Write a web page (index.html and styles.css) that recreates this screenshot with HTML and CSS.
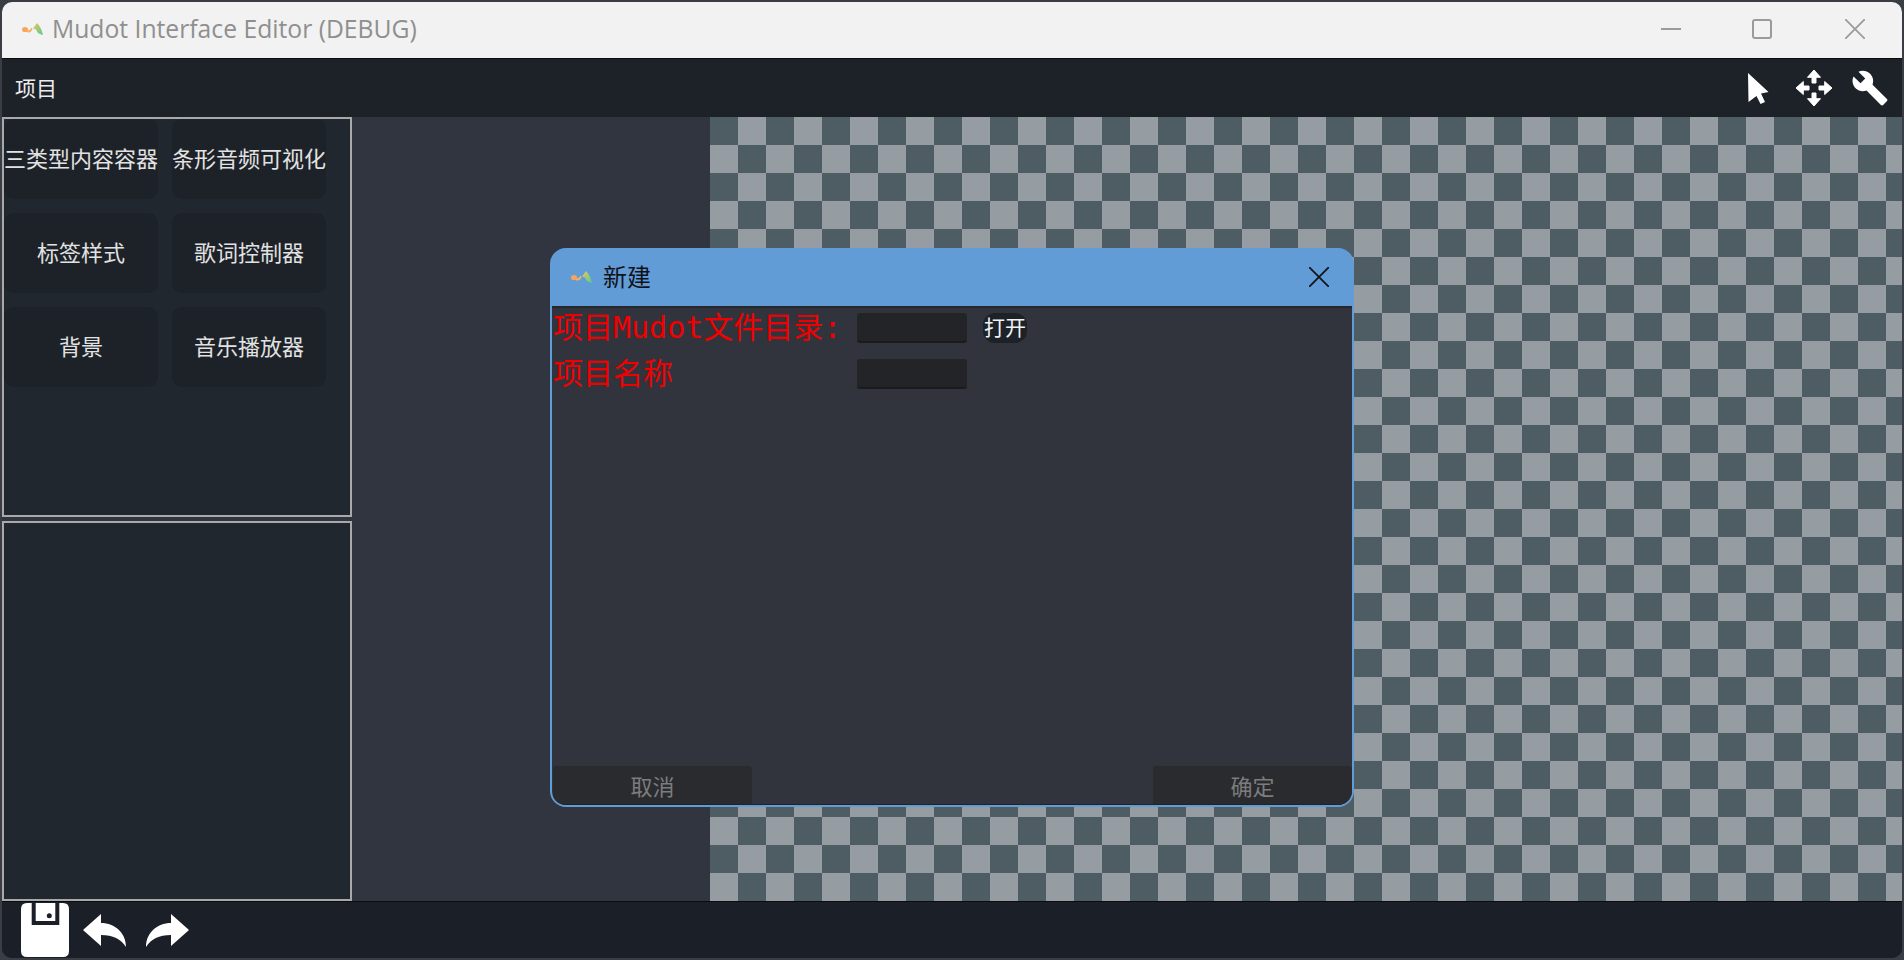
FILE: index.html
```html
<!DOCTYPE html>
<html lang="zh-CN">
  <head>
    <meta charset="UTF-8">
    <title>Mudot Interface Editor (DEBUG)</title>
    <link rel="stylesheet" href="styles.css">
  </head>

  <body>
    <svg class="defs" width="0" height="0" aria-hidden="true">
      <defs>
        <linearGradient id="logo-green" x1="0" y1="0" x2="1" y2="1">
          <stop offset="0" stop-color="#f2c35c"/>
          <stop offset="1" stop-color="#4fcf8c"/>
        </linearGradient>
        <symbol id="logo" viewBox="0 0 21 12">
          <ellipse cx="3" cy="6.500" rx="3" ry="2.600" fill="#f8a45c"/>
          <path d="M5 7.500 Q8 8 9.500 4.500 L10.500 6.500 Q8 11 5 9z" fill="#f8b060"/>
          <path d="M11 5.500 L15 0 Q19.500 4.500 21 12 Q15.500 11 14 6.500 z" fill="url(#logo-green)"/>
        </symbol>
      </defs>
    </svg>

    <div class="window">
      <header class="titlebar">
        <svg class="logo"><use href="#logo"/></svg>
        <span class="title">Mudot Interface Editor (DEBUG)</span>
        <div class="controls">
          <svg width="20" height="20" viewBox="0 0 20 20"><path d="M0 10h20" stroke="#9b9b9b" stroke-width="2"/></svg>
          <svg width="20" height="20" viewBox="0 0 20 20"><rect x="1" y="1" width="18" height="18" rx="2" fill="none" stroke="#9b9b9b" stroke-width="2"/></svg>
          <svg class="control-close" width="20" height="20" viewBox="0 0 20 20"><path d="M0 0L20 20M20 0L0 20" stroke="#9b9b9b" stroke-width="1.800"/></svg>
        </div>
      </header>

      <nav class="menubar">
        <span class="menu-item">项目</span>
        <div class="tools">
          <svg class="tool-cursor" width="21" height="31" viewBox="0 0 21 31"><path d="M0 0L20.500 19L13 20.500L17 29L12.500 31L8.500 23L.5 29z" fill="#fff"/></svg>
          <svg class="tool-move" width="38" height="38" viewBox="0 0 38 38" fill="#fff" stroke="#fff" stroke-width="1" stroke-linejoin="round">
            <path d="M19 1L25.500 8.300H21V14H17V8.300H12.500z"/>
            <path d="M19 37L25.500 29.700H21V24H17V29.700H12.500z"/>
            <path d="M1 19L8.300 12.500V17H14V21H8.300V25.500z"/>
            <path d="M37 19L29.700 12.500V17H24V21H29.700V25.500z"/>
          </svg>
          <svg class="tool-wrench" width="38" height="38" viewBox="0 0 24 24"><path d="M22.700 19l-9.100-9.100c.9-2.300.4-5-1.500-6.900-2-2-5-2.400-7.400-1.300L9 6 6 9 1.600 4.700C.4 7.100.9 10.100 2.900 12.100c1.900 1.900 4.600 2.400 6.900 1.500l9.100 9.100c.4.4 1 .4 1.400 0l2.300-2.300c.5-.4.5-1.100.1-1.400z" fill="#fff"/></svg>
        </div>
      </nav>

      <main class="workspace">
        <aside class="sidebar">
          <section class="panel panel-widgets">
            <div class="widget">三类型内容容器</div>
            <div class="widget">条形音频可视化</div>
            <div class="widget">标签样式</div>
            <div class="widget">歌词控制器</div>
            <div class="widget">背景</div>
            <div class="widget">音乐播放器</div>
          </section>
          <section class="panel panel-props"></section>
        </aside>
        <div class="gutter"></div>
        <div class="canvas"></div>
      </main>

      <footer class="bottombar">
        <svg width="48" height="54" viewBox="0 0 48 54">
          <path fill-rule="evenodd" d="M6 0H10.700V22H38.300V0H42Q48 0 48 6V48Q48 54 42 54H6Q0 54 0 48V6Q0 0 6 0z" fill="#fff"/>
          <path d="M14.700 0H34.300V18H14.700z" fill="#fff"/>
          <circle cx="28.300" cy="12.700" r="2.500" fill="#1b1f27"/>
        </svg>
        <svg class="undo" width="43" height="33" viewBox="0 0 43 33"><path d="M0 16L18 0V9C32 9 43 19 43 33C38 25 30 21 18 21V32z" fill="#fff"/></svg>
        <svg class="redo" width="43" height="33" viewBox="0 0 43 33"><path d="M43 16L25 0V9C11 9 0 19 0 33C5 25 13 21 25 21V32z" fill="#fff"/></svg>
      </footer>

      <div class="dialog">
        <div class="dialog-title">
          <svg class="logo"><use href="#logo"/></svg>
          <span class="dialog-name">新建</span>
          <svg class="dialog-close" width="20" height="20" viewBox="0 0 20 20"><path d="M0 0L20 20M20 0L0 20" stroke="#11151b" stroke-width="1.800"/></svg>
        </div>
        <div class="dialog-body">
          <div class="form-row">
            <label class="form-label">项目Mudot文件目录:</label>
            <div class="form-input"></div>
            <button class="open-btn">打开</button>
          </div>
          <div class="form-row">
            <label class="form-label">项目名称</label>
            <div class="form-input"></div>
          </div>
          <div class="dialog-footer">
            <button class="footer-btn">取消</button>
            <button class="footer-btn">确定</button>
          </div>
        </div>
      </div>
    </div>
  </body>
</html>
```

FILE: styles.css
```css
* {
  box-sizing: border-box;
  margin: 0;
  padding: 0;
}

html, body {
  width: 1904px;
  height: 960px;
  overflow: hidden;
  background-color: #3a3e44;
}

body {
  padding: 2px;
  font-family: "Noto Sans CJK SC", sans-serif;
}

.defs {
  position: absolute;
}

.window {
  position: relative;
  width: 1900px;
  height: 956px;
  display: flex;
  flex-direction: column;
  border-radius: 10px;
  overflow: hidden;
  background-color: #1b1f27;
}

.titlebar {
  height: 57px;
  display: flex;
  align-items: center;
  padding: 0 0 2px 20px;
  background-color: #f2f2f2;
  border-bottom: 1px solid #0c0c0c;
}

.logo {
  width: 21px;
  height: 12px;
  flex-shrink: 0;
}

.title {
  margin-left: 9px;
  margin-bottom: 2px;
  font-family: "Open Sans", sans-serif;
  font-size: 24.700px;
  color: #8f8f8f;
}

.controls {
  margin-left: auto;
  margin-right: 37px;
  display: flex;
  gap: 71px;
}

.control-close {
  margin-left: 2px;
}

.menubar {
  height: 58px;
  display: flex;
  align-items: center;
  justify-content: space-between;
  padding: 0 13px;
  background-color: #1d2229;
}

.menu-item {
  font-size: 21px;
  color: #ebebeb;
  padding-bottom: 2px;
}

.tools {
  display: flex;
  align-items: center;
}

.tool-move {
  margin-left: 26px;
}

.tool-wrench {
  margin-left: 18px;
}

.workspace {
  height: 784px;
  display: flex;
}

.sidebar {
  width: 350px;
  display: flex;
  flex-direction: column;
  gap: 4px;
  background-color: #303540;
}

.panel {
  border: 2px solid #a9a9a9;
  background-color: #21272e;
}

.panel-widgets {
  height: 400px;
  display: grid;
  grid-template-columns: 154px 154px;
  grid-auto-rows: 80px;
  gap: 14px;
}

.panel-props {
  flex: 1;
}

.widget {
  display: flex;
  align-items: center;
  justify-content: center;
  padding-bottom: 5px;
  white-space: nowrap;
  border-radius: 10px;
  font-size: 22px;
  color: #e2e2e2;
  background-color: #1d2229;
}

.gutter {
  width: 358px;
  background-color: #303540;
}

.canvas {
  flex: 1;
  background-color: #4e5c64;
  background-image: conic-gradient(#959ca2 25%, #4e5c64 0 50%, #959ca2 0 75%, #4e5c64 0);
  background-size: 56px 56px;
}

.bottombar {
  flex: 1;
  display: flex;
  align-items: center;
  padding-left: 19px;
  background-color: #1b1f27;
  border-top: 1px solid #0c0c0c;
}

.undo {
  margin-left: 14px;
}

.redo {
  margin-left: 20px;
}

/* dialog sits on top of everything */
.dialog {
  position: absolute;
  left: 548px;
  top: 246px;
  width: 804px;
  height: 559px;
  display: flex;
  flex-direction: column;
  border: 2px solid #629cd6;
  border-radius: 16px;
  overflow: hidden;
  background-color: #629cd6;
}

.dialog-title {
  height: 56px;
  flex-shrink: 0;
  display: flex;
  align-items: center;
  padding: 0 23px 2px 19px;
}

.dialog-name {
  margin-left: 11px;
  margin-bottom: 3px;
  font-size: 24px;
  color: #10131a;
}

.dialog-close {
  margin-left: auto;
}

.dialog-body {
  flex: 1;
  display: flex;
  flex-direction: column;
  gap: 16px;
  padding-top: 5px;
  background-color: #32343d;
  border-top: 2px solid #25272c;
  border-bottom: 1px solid #222327;
}

.form-row {
  height: 30px;
  display: flex;
  align-items: center;
}

.form-label {
  width: 305px;
  padding-left: 1px;
  font-family: "DejaVu Sans Mono", "Noto Sans CJK SC", monospace;
  font-size: 30px;
  line-height: 30px;
  white-space: nowrap;
  color: #f00000;
}

.form-input {
  width: 110px;
  height: 30px;
  border-radius: 3px;
  background-color: #232428;
  border-bottom: 2px solid #1a1b1e;
}

.open-btn {
  width: 44px;
  height: 30px;
  margin-left: 16px;
  padding-bottom: 3px;
  border: none;
  border-radius: 12px;
  font-family: inherit;
  font-size: 21px;
  line-height: 27px;
  color: #f2f2f2;
  background-color: #1d2229;
}

.dialog-footer {
  margin-top: auto;
  display: flex;
  justify-content: space-between;
  padding: 0 0 0 1px;
}

.footer-btn {
  width: 199px;
  height: 38px;
  border: none;
  border-radius: 3px 3px 0 0;
  font-family: inherit;
  font-size: 22px;
  color: #7c7c7c;
  background-color: #2a2b2f;
}
```
